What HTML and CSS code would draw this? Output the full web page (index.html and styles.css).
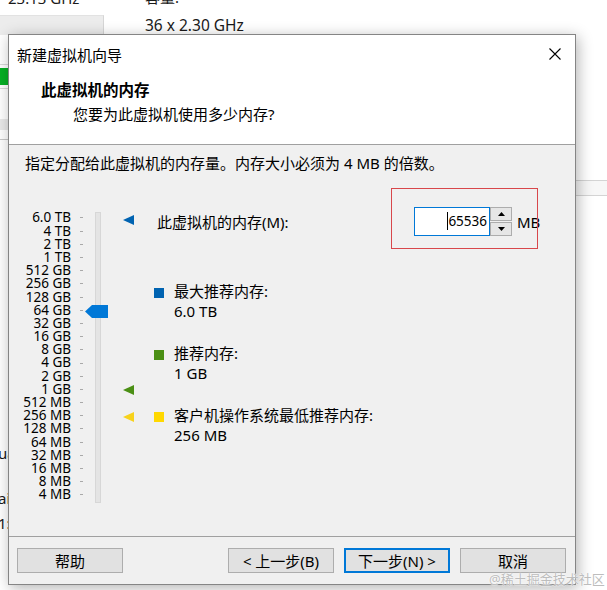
FILE: index.html
```html
<!DOCTYPE html>
<html lang="zh-CN">
<head>
<meta charset="utf-8">
<title>新建虚拟机向导</title>
<link rel="stylesheet" href="styles.css">
</head>
<body>
<div class="desktop">
  <div class="bg-text bg-t1">23.13 GHz</div>
  <div class="bg-text bg-t2">容量:</div>
  <div class="bg-tab"></div>
  <div class="bg-text bg-t3">36 x 2.30 GHz</div>
  <div class="bg-line bg-l0"></div>
  <div class="bg-green"></div>
  <div class="bg-line bg-l1"></div>
  <div class="bg-band"></div>
  <div class="bg-line bg-l2"></div>
  <div class="bg-text bg-t4">ua</div>
  <div class="bg-text bg-t5">ai</div>
  <div class="bg-text bg-t6">1:</div>
  <div class="bg-rband"></div>

  <div class="dialog">
    <div class="titlebar">
      <span>新建虚拟机向导</span>
      <svg class="close" width="12" height="12" viewBox="0 0 12 12"><path d="M0.5 0.5 L11.5 11.5 M11.5 0.5 L0.5 11.5" stroke="#000" stroke-width="1.1" fill="none"/></svg>
    </div>
    <div class="header">
      <div class="h-title">此虚拟机的内存</div>
      <div class="h-sub">您要为此虚拟机使用多少内存?</div>
    </div>
    <div class="body">
      <div class="instr">指定分配给此虚拟机的内存量。内存大小必须为 4 MB 的倍数。</div>
      <div class="main">
        <div class="scale">
          <div class="labels">
            <div class="row"><span>6.0 TB</span><i></i></div>
            <div class="row"><span>4 TB</span><i></i></div>
            <div class="row"><span>2 TB</span><i></i></div>
            <div class="row"><span>1 TB</span><i></i></div>
            <div class="row"><span>512 GB</span><i></i></div>
            <div class="row"><span>256 GB</span><i></i></div>
            <div class="row"><span>128 GB</span><i></i></div>
            <div class="row"><span>64 GB</span><i></i></div>
            <div class="row"><span>32 GB</span><i></i></div>
            <div class="row"><span>16 GB</span><i></i></div>
            <div class="row"><span>8 GB</span><i></i></div>
            <div class="row"><span>4 GB</span><i></i></div>
            <div class="row"><span>2 GB</span><i></i></div>
            <div class="row"><span>1 GB</span><i></i></div>
            <div class="row"><span>512 MB</span><i></i></div>
            <div class="row"><span>256 MB</span><i></i></div>
            <div class="row"><span>128 MB</span><i></i></div>
            <div class="row"><span>64 MB</span><i></i></div>
            <div class="row"><span>32 MB</span><i></i></div>
            <div class="row"><span>16 MB</span><i></i></div>
            <div class="row"><span>8 MB</span><i></i></div>
            <div class="row"><span>4 MB</span><i></i></div>
          </div>
          <div class="track"></div>
          <svg class="thumb" width="23" height="13" viewBox="0 0 23 13"><polygon points="0,6.5 7,0 23,0 23,13 7,13" fill="#0078d7"/></svg>
          <svg class="marker mk-blue" width="11" height="10" viewBox="0 0 11 10"><polygon points="0,5 11,0 11,10" fill="#0063b1"/></svg>
          <svg class="marker mk-green" width="11" height="10" viewBox="0 0 11 10"><polygon points="0,5 11,0 11,10" fill="#4a8f14"/></svg>
          <svg class="marker mk-yellow" width="11" height="10" viewBox="0 0 11 10"><polygon points="0,5 11,0 11,10" fill="#f7d21c"/></svg>
        </div>
        <div class="content">
          <div class="mem-row">
            <span class="mem-label">此虚拟机的内存(M):</span>
            <div class="field"><span class="caret"></span>65536</div>
            <div class="spin">
              <div class="spin-btn"><svg width="7" height="4" viewBox="0 0 7 4"><polygon points="0,4 3.5,0 7,4" fill="#000"/></svg></div>
              <div class="spin-btn"><svg width="7" height="4" viewBox="0 0 7 4"><polygon points="0,0 7,0 3.5,4" fill="#000"/></svg></div>
            </div>
            <span class="unit">MB</span>
          </div>
          <div class="legend">
            <div class="item"><i class="sq sq-blue"></i><div><div>最大推荐内存:</div><div>6.0 TB</div></div></div>
            <div class="item"><i class="sq sq-green"></i><div><div>推荐内存:</div><div>1 GB</div></div></div>
            <div class="item"><i class="sq sq-yellow"></i><div><div>客户机操作系统最低推荐内存:</div><div>256 MB</div></div></div>
          </div>
        </div>
      </div>
    </div>
    <div class="footer">
      <button class="btn">帮助</button>
      <div class="nav">
        <button class="btn">&lt; 上一步(B)</button>
        <button class="btn btn-default">下一步(N) &gt;</button>
        <button class="btn">取消</button>
      </div>
    </div>
  </div>

  <div class="annot"></div>
  <div class="watermark">@稀土掘金技术社区</div>
</div>
</body>
</html>
```
FILE: styles.css
```css
* { box-sizing: border-box; margin: 0; padding: 0; }
html, body { width: 607px; height: 590px; overflow: hidden; background: #fff; }
body {
  font-family: "Noto Sans", "Noto Sans CJK SC", sans-serif;
  font-size: 15px;
  line-height: 20px;
  color: #000;
}
.desktop { position: relative; width: 607px; height: 590px; overflow: hidden; background: #fff; }

/* background window fragments */
.bg-text { position: absolute; font-size: 15px; line-height: 20px; color: #1a1a1a; white-space: nowrap; }
.bg-t1 { left: 8px; top: -12px; }
.bg-t2 { left: 145px; top: -13px; }
.bg-t3 { left: 145px; top: 15px; font-size: 15.5px; }
.bg-t4 { left: -2px; top: 443px; }
.bg-t5 { left: -2px; top: 488px; }
.bg-t6 { left: -2px; top: 513px; }
.bg-tab { position: absolute; left: 0; top: 15px; width: 104px; height: 20px; background: #ececec; border-right: 1px solid #d6d6d6; border-top: 1px solid #e2e2e2; }
.bg-green { position: absolute; left: 0; top: 68px; width: 8px; height: 17px; background: #06b025; }
.bg-line { position: absolute; left: 0; width: 8px; height: 1px; background: #d9d9d9; }
.bg-l0 { top: 64px; }
.bg-l1 { top: 88px; }
.bg-l2 { top: 139px; background: #c8c8c8; }
.bg-band { position: absolute; left: 0; top: 119px; width: 8px; height: 11px; background: #e9e9e9; }
.bg-rband { position: absolute; left: 576px; top: 180px; width: 31px; height: 16px; background: #f7f7f7; border-top: 1px solid #d4d4d4; border-bottom: 1px solid #d4d4d4; }

/* dialog window */
.dialog {
  position: absolute;
  left: 8px; top: 34px;
  width: 568px; height: 551px;
  border: 1px solid #858585;
  background: #f0f0f0;
  display: flex;
  flex-direction: column;
  box-shadow: 2px 3px 14px rgba(0, 0, 0, 0.30);
}
.titlebar {
  height: 38px;
  flex: none;
  background: #fff;
  display: flex;
  align-items: center;
  justify-content: space-between;
  padding: 1px 14px 0 8px;
}
.close { display: block; margin-top: -2px; }
.header {
  height: 72px;
  flex: none;
  background: #fff;
  border-bottom: 1px solid #a0a0a0;
  padding-top: 7px;
}
.h-title { padding-left: 32px; font-weight: 700; font-size: 15.5px; }
.h-sub { padding-left: 64px; margin-top: 4px; }

.body { flex: 1; padding-top: 8px; }
.instr { padding-left: 16px; }
.main { display: flex; margin-top: 34px; }

.scale { position: relative; width: 145px; flex: none; display: flex; align-items: flex-start; padding-top: 4.4px; }
.labels { display: flex; flex-direction: column; }
.row { display: flex; align-items: center; height: 13.2px; }
.row span { width: 62px; text-align: right; font-size: 13.5px; line-height: 13.2px; white-space: nowrap; }
.row i { display: block; width: 3px; height: 1px; background: #a9a9a9; margin-left: 9px; }
.track { width: 6px; height: 291px; margin-left: 12px; margin-top: 0.6px; background: #e4e4e4; border: 1px solid #d7d7d7; }
.thumb { position: absolute; left: 76px; top: 98px; }
.marker { position: absolute; left: 114px; }
.mk-blue { top: 8px; }
.mk-green { top: 178px; }
.mk-yellow { top: 205px; }

.content { flex: 1; }
.mem-row { display: flex; align-items: center; height: 29px; }
.mem-label { width: 260px; padding-left: 3px; flex: none; }
.field {
  position: relative;
  width: 76px; height: 29px;
  background: #fff;
  border: 1px solid #0078d7;
  text-align: right;
  padding-right: 2px;
  font-size: 13.5px;
  line-height: 26px;
}
.caret { position: absolute; left: 32px; top: 4px; width: 1px; height: 18px; background: #000; }
.spin { width: 22px; height: 29px; display: flex; flex-direction: column; gap: 1px; }
.spin-btn {
  flex: 1;
  background: #e6e6e6;
  border: 1px solid #adadad;
  display: flex; align-items: center; justify-content: center;
}
.spin-btn svg { display: block; }
.unit { margin-left: 5px; }

.legend { margin-top: 45px; display: flex; flex-direction: column; gap: 22px; }
.item { display: flex; gap: 10px; align-items: flex-start; }
.sq { display: block; width: 10px; height: 10px; margin-top: 6.5px; flex: none; }
.sq-blue { background: #0063b1; }
.sq-green { background: #4a8f14; }
.sq-yellow { background: #ffd800; }

.footer {
  height: 48px;
  flex: none;
  border-top: 1px solid #a0a0a0;
  display: flex;
  justify-content: space-between;
  padding: 11px 9px 0 8px;
}
.nav { display: flex; gap: 10px; }
.btn {
  width: 106px; height: 25px;
  background: #e1e1e1;
  border: 1px solid #adadad;
  font: inherit;
  font-size: 15px;
  line-height: 20px;
  color: #000;
}
.btn-default { border: 2px solid #0078d7; }

.annot { position: absolute; left: 391px; top: 188px; width: 147px; height: 61px; border: 1px solid #d8474b; }
.watermark {
  position: absolute;
  left: 489px; top: 569px;
  font-size: 13px;
  line-height: 20px;
  color: #bdbdbd;
  white-space: nowrap;
  text-shadow: 0 0 2px #fff, 0 0 1px #fff;
}
```
